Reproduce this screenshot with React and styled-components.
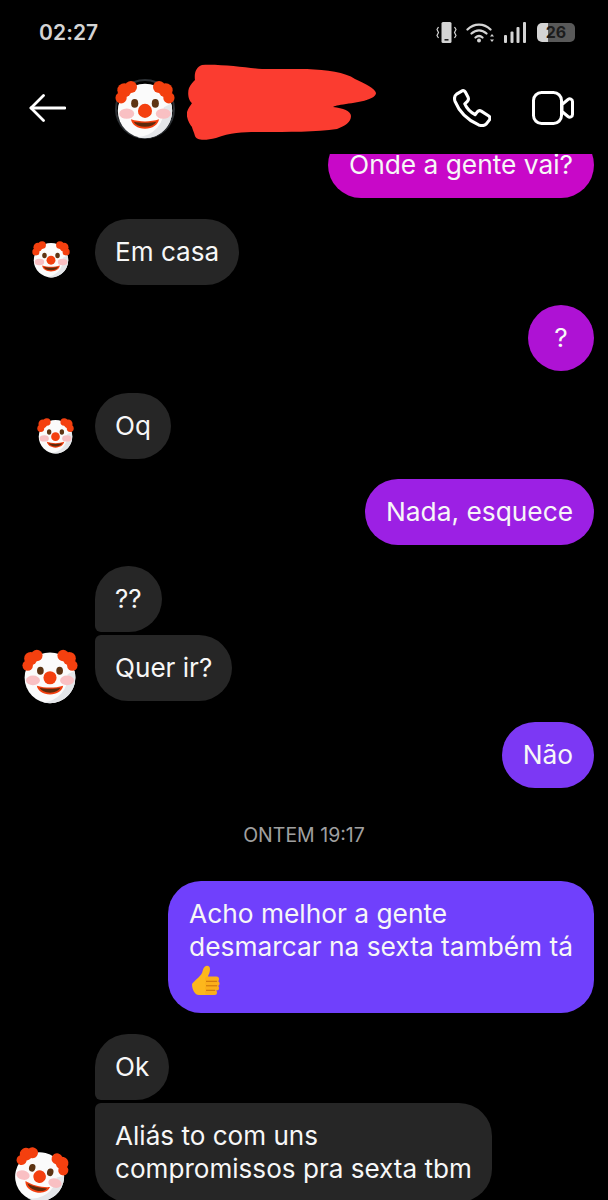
import React from "react";
import styled, { createGlobalStyle } from "styled-components";

const GlobalStyle = createGlobalStyle`
  html, body {
    margin: 0;
    padding: 0;
    background: #000;
  }
`;

const Screen = styled.div`
  width: 608px;
  height: 1200px;
  background: #000;
  color: #f7f7f7;
  font-family: Inter, Roboto, "Liberation Sans", sans-serif;
  display: flex;
  flex-direction: column;
  overflow: hidden;
`;

const StatusBar = styled.div`
  height: 66px;
  flex: none;
  padding: 0 33px 2px 39px;
  box-sizing: border-box;
  display: flex;
  align-items: center;
  justify-content: space-between;
`;

const Clock = styled.span`
  font-size: 21px;
  font-weight: 600;
  color: #d4d4d4;
  letter-spacing: 0.1px;
`;

const StatusIcons = styled.div`
  display: flex;
  align-items: center;
  gap: 9px;
`;

const Battery = styled.div`
  width: 38px;
  height: 19px;
  margin-left: 2px;
  border-radius: 5px;
  background: linear-gradient(to right, #d4d4d4 0 30%, #595959 30% 100%);
  color: #1c1c1c;
  font-size: 16px;
  font-weight: 700;
  line-height: 19px;
  text-align: center;
`;

const Header = styled.header`
  height: 88px;
  flex: none;
  padding: 0 34px 5px 29px;
  box-sizing: border-box;
  display: flex;
  align-items: center;
`;

const HeaderActions = styled.div`
  margin-left: auto;
  display: flex;
  align-items: center;
  gap: 41px;
`;

const Scribble = styled.svg`
  margin: 0 0 7px 12px;
  flex: none;
`;

const HeaderAvatar = styled.div`
  width: 60px;
  height: 60px;
  margin: 2px 0 0 49px;
  border-radius: 50%;
  box-shadow: inset 0 0 0 2px #2c3034;
  flex: none;
  display: flex;
`;

const Messages = styled.main`
  flex: 1;
  min-height: 0;
  overflow: hidden;
  display: flex;
  flex-direction: column;
`;

const Row = styled.div`
  flex: none;
  display: flex;
  align-items: flex-end;
  justify-content: ${(p) => (p.$mine ? "flex-end" : "flex-start")};
  margin-top: ${(p) => p.$top ?? 21}px;
  padding-right: 14px;
`;

const AvatarSlot = styled.div`
  width: 95px;
  height: 66px;
  flex: none;
  position: relative;
`;

const Bubble = styled.div`
  padding: 16px 20px 17px;
  min-width: 66px;
  font-size: 26.1px;
  line-height: 33px;
  text-align: ${(p) => (p.$center ? "center" : "left")};
  background: ${(p) => p.$bg || "#262626"};
  border-radius: ${(p) => p.$radius || "33px"};
  box-sizing: border-box;
  white-space: pre;
`;

const MyBubble = styled(Bubble)`
  padding: 16px 21px 17px;
  font-size: 26.3px;
`;

const Divider = styled.div`
  flex: none;
  height: 51px;
  margin-top: 21px;
  display: flex;
  align-items: center;
  justify-content: center;
  font-size: 19.5px;
  color: #a0a0a0;
`;

const Thumb = styled.svg`
  display: block;
  margin: 2px 0 0 2px;
`;

const ClownFace = styled.svg`
  display: block;
  transform: rotate(${(p) => p.$tilt || 0}deg);
`;

const PlacedClown = styled(ClownFace)`
  position: absolute;
  left: ${(p) => p.$left}px;
  bottom: ${(p) => p.$bottom}px;
`;

function ClownArt() {
  return (
    <>
      <circle cx="32" cy="34" r="29" fill="#fbfbfb" />
      <path d="M52 30a29 29 0 0 1-28 32 29 29 0 0 0 37-28 29 29 0 0 0-1-8z" fill="#e4e6e9" />
      <g fill="#f4400f">
        <circle cx="17" cy="8.500" r="6.500" />
        <circle cx="10" cy="12" r="7.500" />
        <circle cx="6.500" cy="20" r="6" />
        <circle cx="47" cy="8.500" r="6.500" />
        <circle cx="54" cy="12" r="7.500" />
        <circle cx="57.500" cy="20" r="6" />
      </g>
      <ellipse cx="12.500" cy="37" rx="8" ry="5.500" fill="#f9c0c3" />
      <ellipse cx="51.500" cy="37" rx="8" ry="5.500" fill="#f9c0c3" />
      <ellipse cx="21" cy="26" rx="3.800" ry="4.600" fill="#5d3413" />
      <ellipse cx="43" cy="26" rx="3.800" ry="4.600" fill="#5d3413" />
      <path d="M17 43c9 3 21 3 30 0-1 6-7 10-15 10s-14-4-15-10z" fill="#f4400f" />
      <path d="M20 45.500c7 1.600 17 1.600 24 0-2 3.500-6 5.500-12 5.500s-10-2-12-5.500z" fill="#5d2a0c" />
      <circle cx="32" cy="34" r="7.500" fill="#f4400f" />
    </>
  );
}

function Clown({ size, left, bottom, tilt }) {
  return (
    <PlacedClown
      viewBox="0 0 64 64"
      width={size}
      height={size}
      $left={left}
      $bottom={bottom}
      $tilt={tilt}
    >
      <ClownArt />
    </PlacedClown>
  );
}

function VibrateIcon() {
  return (
    <svg width="21" height="21" viewBox="0 0 21 21" fill="none">
      <rect x="5.500" y="0" width="10" height="21" rx="1.500" fill="#d4d4d4" />
      <rect x="8.500" y="17" width="4" height="1.600" fill="#222" />
      <path d="M2.500 5 1 7.500l1.500 3-1.500 3 1.500 2.500M18.500 5 20 7.500l-1.500 3 1.500 3-1.500 2.500" stroke="#d4d4d4" strokeWidth="1.200" />
    </svg>
  );
}

function WifiIcon() {
  return (
    <svg width="29" height="21" viewBox="0 0 29 21" fill="none">
      <g stroke="#d4d4d4" strokeWidth="2.300" strokeLinecap="round">
        <path d="M1.500 7.500C8 1 18 1 24.500 7.500" />
        <path d="M5.500 11.500c4.500-4.300 10.500-4.300 15 0" />
        <path d="M9.500 15.500c2.300-2 4.700-2 7 0" />
      </g>
      <circle cx="13" cy="18.500" r="2" fill="#d4d4d4" />
      <path d="M26 12l2 2.500h-4zM26 20l2-2.500h-4z" fill="#d4d4d4" />
    </svg>
  );
}

function SignalIcon() {
  return (
    <svg width="22" height="21" viewBox="0 0 22 21" fill="#d4d4d4">
      <rect x="0" y="13" width="3" height="8" rx="1" />
      <rect x="6.500" y="9.500" width="3" height="11.500" rx="1" />
      <rect x="12.500" y="5" width="3" height="16" rx="1" />
      <rect x="19" y="0" width="3" height="21" rx="1" />
    </svg>
  );
}

function BackIcon() {
  return (
    <svg width="37" height="28" viewBox="0 0 37 28" fill="none" stroke="#fff" strokeWidth="2.800" strokeLinecap="round" strokeLinejoin="round">
      <path d="M36 14H2" />
      <path d="M14.500 1.500 2 14l12.500 12.500" />
    </svg>
  );
}

function PhoneIcon() {
  return (
    <svg width="38" height="38" viewBox="0 0 37 37" fill="none" stroke="#fff" strokeWidth="3" strokeLinejoin="round">
      <path d="M8.500 2 3.500 5C1.500 6.500 1 9 2 12c4 10 12 18 23 23 3 1 6 .5 7.500-1l3-4c.8-1.500.5-3-1-4l-7-4.500c-1.500-.8-2.700-.5-4 1L21.500 25C16 22 13 18 11.500 14.500L14 12c1.200-1.200 1.300-2.500.7-4L12 3c-.7-1.300-2.200-1.800-3.500-1z" />
    </svg>
  );
}

function VideoIcon() {
  return (
    <svg width="42" height="34" viewBox="0 0 42 34" fill="none" stroke="#fff" strokeWidth="3" strokeLinejoin="round">
      <rect x="1.500" y="1.500" width="28" height="31" rx="8" />
      <path d="M30 13.500 36 8.500c1.800-1.400 4.500-.4 4.500 2v13c0 2.400-2.700 3.400-4.500 2L30 20.500z" />
    </svg>
  );
}

function ThumbsUp() {
  return (
    <Thumb width="29" height="31" viewBox="0 0 29 31">
      <path d="M1 19C4 15 9 12 11 8c1-3 1-5 3-6.500C16 0 19 1 19 4c0 3-1 5-2 7v19H8c-4 0-7-5-7-11z" fill="#fdb71c" />
      <rect x="14" y="11.500" width="14" height="5" rx="2.500" fill="#fbae1a" />
      <rect x="14" y="16" width="14.500" height="5" rx="2.500" fill="#fbae1a" />
      <rect x="14" y="20.500" width="14" height="5" rx="2.500" fill="#fbae1a" />
      <rect x="14" y="25" width="12" height="5" rx="2.500" fill="#fbae1a" />
      <path d="M15 16.300h11M15 20.800h11M15 25.300h9" stroke="#c96f0a" strokeWidth="1" />
    </Thumb>
  );
}

export default function App() {
  return (
    <Screen>
      <GlobalStyle />
      <StatusBar>
        <Clock>02:27</Clock>
        <StatusIcons>
          <VibrateIcon />
          <WifiIcon />
          <SignalIcon />
          <Battery>26</Battery>
        </StatusIcons>
      </StatusBar>

      <Header>
        <BackIcon />
        <HeaderAvatar>
          <ClownFace viewBox="0 0 64 64" width="60" height="60">
            <ClownArt />
          </ClownFace>
        </HeaderAvatar>
        <Scribble width="190" height="80" viewBox="0 0 190 80">
          <path
            d="M15 1C35 0 60 4 75 5h45c20 1 38 3 48 10 10 5 20 9 21 14 0 6-15 9-30 11-8 1-12 2-13 3 10 1 18 4 18 9 0 6-6 10-14 13-20 3-50 3-75 3-15 0-30 0-46 6-12 3-20 2-21-2-1-4-3-8-3-9C3 60-1 55 0 48c1-4 4-7 5-9C2 37 0 30 2 24c2-4 4-6 6-8C7 9 9 3 15 1z"
            fill="#fb3c30"
          />
        </Scribble>
        <HeaderActions>
          <PhoneIcon />
          <VideoIcon />
        </HeaderActions>
      </Header>

      <Messages>
        <Row $mine $top={-22}>
          <MyBubble $bg="#c808c8">Onde a gente vai?</MyBubble>
        </Row>
        <Row $top={21}>
          <AvatarSlot>
            <Clown size={38} left={32} bottom={7} />
          </AvatarSlot>
          <Bubble>Em casa</Bubble>
        </Row>
        <Row $mine $top={20}>
          <MyBubble $bg="#ae12d4" $center>?</MyBubble>
        </Row>
        <Row $top={22}>
          <AvatarSlot>
            <Clown size={37} left={37} bottom={5} />
          </AvatarSlot>
          <Bubble>Oq</Bubble>
        </Row>
        <Row $mine $top={20}>
          <MyBubble $bg="#9c20e4">Nada, esquece</MyBubble>
        </Row>
        <Row $top={21}>
          <AvatarSlot />
          <Bubble $radius="33px 33px 33px 6px">??</Bubble>
        </Row>
        <Row $top={3}>
          <AvatarSlot>
            <Clown size={56} left={22} bottom={-3} />
          </AvatarSlot>
          <Bubble $radius="6px 33px 33px 33px">Quer ir?</Bubble>
        </Row>
        <Row $mine $top={21}>
          <MyBubble $bg="#7c38f4">Não</MyBubble>
        </Row>
        <Divider>ONTEM 19:17</Divider>
        <Row $mine $top={21}>
          <MyBubble $bg="#7040fc">
            {"Acho melhor a gente\ndesmarcar na sexta também tá"}
            <ThumbsUp />
          </MyBubble>
        </Row>
        <Row $top={21}>
          <AvatarSlot />
          <Bubble $radius="33px 33px 33px 6px">Ok</Bubble>
        </Row>
        <Row $top={3}>
          <AvatarSlot>
            <Clown size={54} left={13} bottom={0} tilt={14} />
          </AvatarSlot>
          <Bubble $radius="6px 33px 33px 33px">
            {"Aliás to com uns\ncompromissos pra sexta tbm"}
          </Bubble>
        </Row>
      </Messages>
    </Screen>
  );
}
